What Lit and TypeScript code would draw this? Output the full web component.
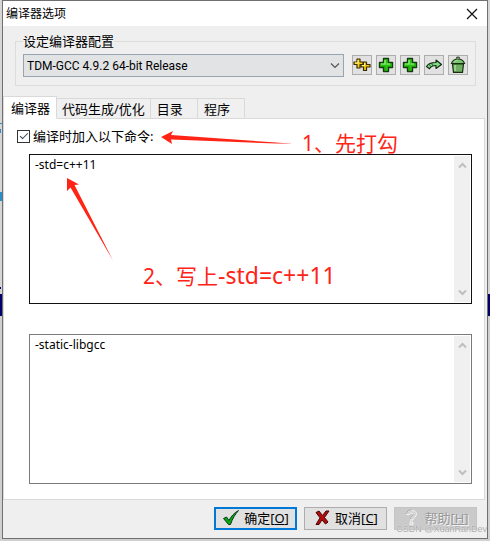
import { LitElement, html, css, svg } from "lit";
import { customElement, property, state } from "lit/decorators.js";
import { classMap } from "lit/directives/class-map.js";

const icons = {
  addDouble: svg`
    <path d="M4 3h3v3h3v2.500H7V12H4V8.500H1V6h3z" fill="#f7d21b" stroke="#3a2c00" stroke-width="1.200" stroke-linejoin="round"/>
    <path d="M10.500 6h3v2.500H17V11h-3.500v3.500h-3V11H8V8.500h2.500z" fill="#f0c40f" stroke="#3a2c00" stroke-width="1.200" stroke-linejoin="round"/>
    <path d="M5 4v3H2M11.500 7v2.500H9" fill="none" stroke="#fff7a0"/>`,
  add: svg`
    <path d="M6.500 2.500h5v4h4v5h-4v4h-5v-4h-4v-5h4z" fill="#2fc415" stroke="#123d0c" stroke-width="1.400" stroke-linejoin="round"/>
    <path d="M8 4v4H4M9.500 8H13" fill="none" stroke="#9bf58a" stroke-width="1.200"/>
    <path d="M4 10.500h4v4M10.500 10.500h4" fill="none" stroke="#1d960d" stroke-width="1"/>`,
  rename: svg`
    <path d="M1.500 10.500C3 7.500 6 6.500 11 6.500V4l5.500 4.500L11 12.500v-3C7.500 9.500 6 10 4.500 12.800z" fill="#7fdc86" stroke="#10280f" stroke-width="1.100" stroke-linejoin="round"/>
    <path d="M4 8.300l1.800 2.400M6.800 7.200l.8 2.500" stroke="#10280f" stroke-width=".8"/>`,
  trash: svg`
    <path d="M7.500 2.500a1.500 1.500 0 0 1 3 0" fill="none" stroke="#16300f" stroke-width="1.200"/>
    <path d="M3.500 8h11l-1 8.300h-9z" fill="#6fae63" stroke="#16300f" stroke-width="1.200"/>
    <path d="M2.500 7.500C3.500 4.500 6 3 9 3s5.500 1.500 6.500 4.500z" fill="#7cc472" stroke="#16300f" stroke-width="1.200"/>
    <path d="M6 9v6" stroke="#a8dca0" stroke-width="1.500"/>
    <path d="M5 6.200c1-1.200 2-1.800 3.500-2" fill="none" stroke="#b9e8b2"/>`,
};

@customElement("tool-button")
export class ToolButton extends LitElement {
  @property() icon: keyof typeof icons = "add";
  @property() label = "";
  static styles = css`
    :host { display: block; }
    .tool {
      display: grid;
      place-items: center;
      box-sizing: border-box;
      width: 20px;
      height: 20px;
      padding: 0;
      border: 1px solid #adadad;
      background: #e1e1e1;
    }
    .icon { display: block; width: 18px; height: 18px; }
  `;
  render() {
    return html`<button class="tool" type="button" aria-label=${this.label}>
      <svg class="icon" viewBox="0 0 18 18">${icons[this.icon]}</svg>
    </button>`;
  }
}

@customElement("command-box")
export class CommandBox extends LitElement {
  @property() value = "";
  @property() label = "";
  @property({ type: Boolean }) strong = false;
  static styles = css`
    :host { display: block; }
    .box {
      display: flex;
      box-sizing: border-box;
      height: 150px;
      padding: 1px;
      border: 1px solid #7a7a7a;
      background: #fff;
    }
    .strong { border-color: #111; }
    .text {
      flex: 1;
      min-width: 0;
      padding: 1px 4px;
      border: 0;
      outline: 0;
      resize: none;
      overflow: hidden;
      background: none;
      color: #000;
      font: 12px/16px "Noto Sans", "Noto Sans CJK SC", sans-serif;
    }
    .bar {
      display: flex;
      flex-direction: column;
      justify-content: space-between;
      align-items: center;
      width: 16px;
      padding: 6px 0;
      box-sizing: border-box;
      background: #f0f0f0;
    }
    .arrow { display: block; width: 9px; height: 7px; }
  `;
  render() {
    return html`<div class=${classMap({ box: true, strong: this.strong })}>
      <textarea class="text" aria-label=${this.label} spellcheck="false" .value=${this.value}></textarea>
      <div class="bar">
        <svg class="arrow" viewBox="0 0 9 7"><path d="M1 5.500l3.500-3.500L8 5.500" fill="none" stroke="#bfbfbf" stroke-width="2"/></svg>
        <svg class="arrow" viewBox="0 0 9 7"><path d="M1 1.500l3.500 3.500L8 1.500" fill="none" stroke="#bfbfbf" stroke-width="2"/></svg>
      </div>
    </div>`;
  }
}

@customElement("app-root")
export class AppRoot extends LitElement {
  @state() private tab = 0;
  private tabs = ["编译器", "代码生成/优化", "目录", "程序"];

  static styles = css`
    :host {
      display: block;
      padding: 0 2px 2px;
      background:
        linear-gradient(#2a8fc8, #2a8fc8) 0 123px / 2px 1px no-repeat,
        linear-gradient(#2a8fc8, #2a8fc8) 0 129px / 1px 4px no-repeat,
        linear-gradient(#2a8fc8, #2a8fc8) 0 192px / 2px 9px no-repeat,
        linear-gradient(#000068, #000068) 0 287px / 1px 2px no-repeat,
        linear-gradient(#d6d6d6 294px, #000068 294px, #000068 316px, #d0d0d0 316px);
      color: #000;
      font: 13px/16px "Noto Sans", "Noto Sans CJK SC", sans-serif;
    }
    .window {
      position: relative;
      border: 1px solid #707070;
      background: #efefef;
    }
    .title {
      display: flex;
      align-items: center;
      justify-content: space-between;
      height: 25px;
      padding: 0 9px 0 3px;
      background: #fff;
    }
    .caption { margin: 0; font-size: 12px; font-weight: 400; }
    .close { display: block; padding: 0; border: 0; background: none; }
    .glyph { display: block; width: 12px; height: 12px; }
    .group {
      display: flex;
      gap: 8px;
      min-width: 0;
      margin: 7px 11px 0 12px;
      padding: 5px 7px 8px;
      border: 1px solid #dcdcdc;
    }
    .legend { padding: 0; }
    .combo { position: relative; display: flex; flex: 1; min-width: 0; }
    .select {
      flex: 1;
      min-width: 0;
      height: 23px;
      padding: 0 20px 0 3px;
      border: 1px solid #98a5b0;
      border-radius: 0;
      appearance: none;
      background: #e1e3e5;
      color: #000;
      font: 12px/16px Roboto, "Noto Sans", sans-serif;
    }
    .chevron { position: absolute; right: 4px; top: 8px; width: 10px; height: 8px; pointer-events: none; }
    .tools { display: flex; gap: 4px; padding-top: 1px; }
    .tabs { display: flex; align-items: flex-end; margin-top: 10px; }
    .tab {
      box-sizing: border-box;
      height: 21px;
      padding: 0 14px 0 6px;
      border: 1px solid #d9d9d9;
      border-left: 0;
      background: #f0f0f0;
      color: #000;
      font: inherit;
      line-height: 16px;
    }
    .wide { padding: 0 5px; }
    .active {
      position: relative;
      height: 23px;
      padding: 0 6px 0 7px;
      border-left: 1px solid #d9d9d9;
      border-bottom-color: #fff;
      background: #fff;
    }
    .panel {
      margin: -1px 2px 0 0;
      padding: 9px 12px 15px 13px;
      border: 1px solid #d9d9d9;
      background: #fff;
    }
    .option { display: flex; align-items: center; gap: 3px; }
    .tick {
      display: grid;
      place-items: center;
      box-sizing: border-box;
      width: 13px;
      height: 13px;
      margin: 0;
      border: 1px solid #333;
      appearance: none;
      background: #fff;
    }
    .tick:checked::after {
      content: "";
      width: 7px;
      height: 3px;
      margin-bottom: 3px;
      border: solid #34424e;
      border-width: 0 0 1px 1px;
      transform: rotate(-45deg);
    }
    .boxes { display: grid; gap: 30px; margin: 10px 0 0 12px; }
    .footer { display: flex; justify-content: flex-end; gap: 7px; padding: 7px 10px 8px; }
    .action {
      display: flex;
      align-items: center;
      justify-content: center;
      gap: 4px;
      box-sizing: border-box;
      width: 83px;
      height: 23px;
      padding: 0 0 2px;
      border: 1px solid #adadad;
      background: #e1e1e1;
      color: #000;
      font: inherit;
    }
    .default { border: 2px solid #0078d7; }
    .action:disabled { border-color: #c4c4c4; background: #cacaca; color: #999; text-shadow: 1px 1px #f4f4f4; }
    .mark { width: 18px; height: 17px; }
    .notes { position: absolute; left: 0; top: 0; width: 484px; height: 300px; pointer-events: none; }
    .note {
      position: absolute;
      color: #ff2416;
      font-size: 21px;
      line-height: 28px;
      white-space: nowrap;
      pointer-events: none;
    }
    .first { left: 299px; top: 128px; }
    .second { left: 140px; top: 260px; }
    .code { font-size: 23px; }
    .stamp {
      position: absolute;
      right: 0;
      bottom: 2px;
      color: #aaa;
      font: 9px/14px "Liberation Sans", sans-serif;
      text-shadow: 0 0 1px #fff;
      pointer-events: none;
    }
  `;

  render() {
    return html`<div class="window">
      <header class="title">
        <h1 class="caption">编译器选项</h1>
        <button class="close" type="button" aria-label="关闭">
          <svg class="glyph" viewBox="0 0 12 12"><path d="M1 1l10 10M11 1L1 11" stroke="#111" stroke-width="1.200"/></svg>
        </button>
      </header>
      <fieldset class="group">
        <legend class="legend">设定编译器配置</legend>
        <div class="combo">
          <select class="select" aria-label="设定编译器配置"><option>TDM-GCC 4.9.2 64-bit Release</option></select>
          <svg class="chevron" viewBox="0 0 10 8"><path d="M1 1.500l4 4 4-4" fill="none" stroke="#555" stroke-width="1.200"/></svg>
        </div>
        <div class="tools">
          <tool-button icon="addDouble" label="自动添加"></tool-button>
          <tool-button icon="add" label="添加"></tool-button>
          <tool-button icon="add" label="添加文件夹"></tool-button>
          <tool-button icon="rename" label="重命名"></tool-button>
          <tool-button icon="trash" label="删除"></tool-button>
        </div>
      </fieldset>
      <div class="tabs" role="tablist">
        ${this.tabs.map(
          (name, i) => html`<button
            type="button"
            role="tab"
            aria-selected=${i === this.tab}
            class=${classMap({ tab: true, active: i === this.tab, wide: i === 1 })}
            @click=${() => (this.tab = i)}
          >${name}</button>`
        )}
      </div>
      <section class="panel">
        <label class="option"><input class="tick" type="checkbox" checked />编译时加入以下命令:</label>
        <div class="boxes">
          <command-box strong label="编译命令" value="-std=c++11"></command-box>
          <command-box label="链接命令" value="-static-libgcc"></command-box>
        </div>
      </section>
      <footer class="footer">
        <button class="action default" type="button">
          <svg class="mark" viewBox="0 0 18 17"><path d="M1.500 9.500l3-1.500 2.500 3.500C9 7.500 12 4 16.500 1.500c-3.500 4-6 8-8 14H6.500z" fill="#0aa60e" stroke="#053f1c"/></svg>
          <span>确定[<u>O</u>]</span>
        </button>
        <button class="action" type="button">
          <svg class="mark" viewBox="0 0 18 17"><path d="M3 3.500L6 2l3.500 4.500L13 2h3l-4.500 6.500L15 13l-2.500 2-3.500-4.200L6 15.500H3L7 8.800z" fill="#b20c0c" stroke="#4a0505"/></svg>
          <span>取消[<u>C</u>]</span>
        </button>
        <button class="action" type="button" disabled>
          <svg class="mark" viewBox="0 0 18 17"><path d="M4.500 5.500C4.500 2.500 7 1.500 9.500 1.500s5 1 5 3.800c0 3-3.500 3-3.500 5.700H8c0-3.500 3-4 3-5.500 0-1-.7-1.500-1.700-1.500S7.500 4.500 7.500 5.500zM8 13h3v2.800H8z" fill="#d2d2d2" stroke="#f5f5f5"/><path d="M4.500 5C4.700 2 7 1 9.500 1M8 10.500c0-3 3-3.500 3-5" fill="none" stroke="#999" stroke-width=".8"/></svg>
          <span>帮助[<u>H</u>]</span>
        </button>
      </footer>
      <svg class="notes" viewBox="3 1 484 300">
        <defs>
          <linearGradient id="fade" x1="0" x2="1"><stop offset=".88" stop-color="#ff2416"/><stop offset="1" stop-color="#ff2416" stop-opacity=".4"/></linearGradient>
        </defs>
        <path d="M161 137l12-6-2 4 120 8.500v.6L171 139.500l1 4.500z" fill="url(#fade)"/>
        <path d="M67 178l12 6.500-4.500.5L113 260.500 70.500 187.500 67 191z" fill="#ff2416"/>
      </svg>
      <span class="note first">1、先打勾</span>
      <span class="note second">2、写上<span class="code">-std=c++11</span></span>
      <span class="stamp">CSDN @XuanRanDev</span>
    </div>`;
  }
}
